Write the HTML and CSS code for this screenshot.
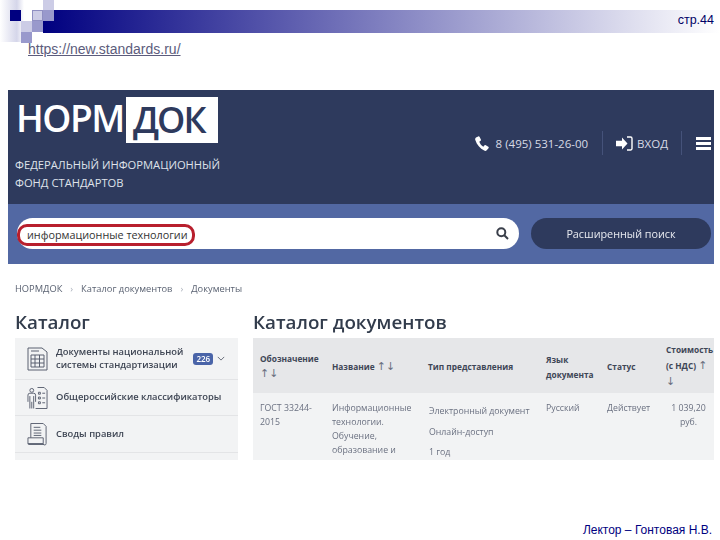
FILE: index.html
```html
<!DOCTYPE html>
<html lang="ru">

<head>
    <meta charset="UTF-8">
    <title>стр.44</title>
    <link rel="stylesheet" href="styles.css">
</head>

<body>
    <div id="slide">
        <!-- slide decoration -->
        <div class="fade"></div>
        <span class="sq sq-navy"></span>
        <span class="sq sq-a"></span>
        <span class="sq sq-b"></span>
        <span class="sq sq-c"></span>
        <span class="sq sq-d"></span>
        <span class="sq sq-e"></span>
        <span class="sq sq-f"></span>

        <div class="bar">стр.44</div>
        <a href="#" class="link">https://new.standards.ru/</a>

        <div class="shot">
            <div class="head">
                <div class="brand">
                    <div class="logo"><span class="logo-a">НОРМ</span><span class="logo-b">ДОК</span></div>
                    <p>ФЕДЕРАЛЬНЫЙ ИНФОРМАЦИОННЫЙ<br>ФОНД СТАНДАРТОВ</p>
                </div>
                <div class="tools">
                    <svg class="ico-phone" viewBox="0 0 14 15"><path d="M3.2 .4 1 1.6C.2 2.2 0 3 .3 4c1.6 5 4.700 8.400 8.900 10.600 1 .5 1.900.3 2.500-.4l1.800-2c.4-.5.3-1-.2-1.400L10.800 9.200c-.5-.3-1-.3-1.400.2L8.300 10.700C6.500 9.800 5.100 8 4.300 5.800l1.300-1c.4-.3.5-.8.300-1.300L4.500.8C4.200.2 3.700.1 3.200.4Z"/></svg>
                    <span class="phone">8 (495) 531-26-00</span>
                    <i class="sep"></i>
                    <svg class="ico-enter" viewBox="0 0 17 15"><path d="M0 4.800h6V1.500L11.500 7.500 6 13.500v-3.300H0Z"/><path class="br" d="M11 1h3.500a1.500 1.500 0 0 1 1.500 1.500v10a1.500 1.500 0 0 1-1.500 1.500H11"/></svg>
                    <span class="login">ВХОД</span>
                    <i class="sep sep-2"></i>
                    <div class="burger"><i></i><i></i><i></i></div>
                </div>
            </div>
            <div class="search">
                <div class="field">
                    <span class="mark">информационные технологии</span>
                    <svg class="ico-search" viewBox="0 0 13 13"><circle cx="5.300" cy="5.300" r="4"/><path d="M8.300 8.300 12 12"/></svg>
                </div>
                <div class="adv">Расширенный поиск</div>
            </div>
            <div class="crumbs">
                <span>НОРМДОК</span><b>›</b><span>Каталог документов</span><b>›</b><span>Документы</span>
            </div>
            <div class="cols">
                <div class="side">
                    <h2>Каталог</h2>
                    <div class="row row-1">
                        <svg class="cat" viewBox="0 0 21 24"><path d="M1 1h14l5 4v18H1ZM4 8h13v12H4ZM4 4h8M8 8v12M12.500 8v12M4 12h13M4 16h13"/></svg>
                        <span class="row-text">Документы национальной<br>системы стандартизации</span>
                        <span class="badge">226</span>
                        <svg class="chev" viewBox="0 0 10 6"><path d="M1 1l4 4 4-4"/></svg>
                    </div>
                    <div class="row row-2">
                        <svg class="cat" viewBox="0 0 22 24"><circle cx="5" cy="4" r="2"/><path d="M1 16V9a2 2 0 0 1 2-2h4a2 2 0 0 1 2 2v7M3 10v13M7 10v13M5 16v7M11 1h7l3 3v19H9M12 6h2v2h-2ZM12 11h2v2h-2ZM12 16h2v2h-2ZM16 7h3M16 12h3M16 17h3"/></svg>
                        <span class="row-text">Общероссийские классификаторы</span>
                    </div>
                    <div class="row">
                        <svg class="cat" viewBox="0 0 22 24"><path d="M4 16V1h13l3 3v18a1.500 1.500 0 0 1-3 0V16H1v6h16M1 22a1 1 0 0 0 1 1h16M7 5h7M7 8h8M7 11h8M7 13.500h8"/></svg>
                        <span class="row-text">Своды правил</span>
                    </div>
                    <div class="row-end"></div>
                </div>
                <div class="main">
                    <h2>Каталог документов</h2>
                    <div class="table">
                        <div class="th">Обозначение<br><span class="arr">↑↓</span></div>
                        <div class="th mid">Название <span class="arr">↑↓</span></div>
                        <div class="th mid">Тип представления</div>
                        <div class="th mid">Язык<br>документа</div>
                        <div class="th mid">Статус</div>
                        <div class="th th-cost">Стоимость<br>(с НДС) <span class="arr">↑</span><br><span class="arr">↓</span></div>
                        <div class="td">ГОСТ 33244-<br>2015</div>
                        <div class="td">Информационные<br>технологии.<br>Обучение,<br>образование и</div>
                        <div class="td td-type"><p>Электронный документ</p><p>Онлайн-доступ</p><p>1 год</p></div>
                        <div class="td">Русский</div>
                        <div class="td">Действует</div>
                        <div class="td td-cost">1 039,20<br>руб.</div>
                    </div>
                </div>
            </div>
        </div>

        <div class="author">Лектор – Гонтовая Н.В.</div>
    </div>
</body>

</html>
```
FILE: styles.css
```css
* {
    margin: 0;
    padding: 0;
    box-sizing: border-box;
}

body {
    background: #fff;
}

#slide {
    position: relative;
    width: 720px;
    height: 540px;
    overflow: hidden;
    font-family: "Liberation Sans", sans-serif;
    display: flex;
    flex-direction: column;
}

/* decoration */
.fade {
    position: absolute;
    left: 0;
    top: 0;
    width: 24px;
    height: 42px;
    background: linear-gradient(90deg, #fff, #d5d6ea 70%, #fff);
}

.sq {
    position: absolute;
    width: 11px;
    height: 11px;
    background: #ccccE6;
}

.sq-navy { left: 10px; top: 10px; background: #000080; }
.sq-a { left: 32px; top: 10px; background: #ccccE6; border: 1px solid #8f8fc2; }
.sq-b { left: 43px; top: 10px; background: #9999cc; }
.sq-c { left: 43px; top: 0; height: 10px; }
.sq-d { left: 21px; top: 21px; }
.sq-e { left: 32px; top: 21px; background: #9999cc; }
.sq-f { left: 21px; top: 32px; background: #9999cc; }

.bar {
    margin: 10px 0 0 43px;
    height: 23px;
    padding-right: 6px;
    background: linear-gradient(90deg, #000080, #fff);
    color: #000066;
    font-size: 12.500px;
    line-height: 20px;
    text-align: right;
}

.link {
    margin: 8px 0 0 28px;
    color: #5c5c7c;
    font-size: 14px;
    line-height: 17px;
    align-self: flex-start;
    text-decoration: underline;
}

.author {
    margin: 62px 8px 0 0;
    color: #000080;
    font-size: 12px;
    line-height: 16px;
    text-align: right;
}

/* screenshot */
.shot {
    margin: 32px 6px 0 8px;
    height: 370px;
    font-family: "Open Sans", sans-serif;
    filter: blur(.35px);
}

.head {
    height: 114px;
    padding: 7px 3px 0 7px;
    background: #2e3a5d;
    display: flex;
    justify-content: space-between;
}

.logo {
    display: flex;
    align-items: flex-start;
    font-size: 36px;
    line-height: 46px;
}

.logo-a {
    color: #fff;
    width: 110px;
    margin: -2px 0 0 1px;
    font-size: 37px;
    font-weight: 600;
    letter-spacing: -1.500px;
}

.logo-b {
    background: #fff;
    color: #2e3a5d;
    width: 92px;
    height: 46px;
    padding-left: 7px;
    font-weight: 600;
    letter-spacing: -2px;
}

.brand p {
    margin-top: 13px;
    color: #dfe2ea;
    font-size: 11.200px;
    line-height: 18px;
}

.tools {
    display: flex;
    align-items: center;
    height: 24px;
    margin-top: 34px;
    color: #d8dbe6;
    font-size: 11.500px;
}

.ico-phone {
    width: 14px;
    height: 15px;
    fill: #fff;
    margin-right: 7px;
}

.sep {
    width: 1px;
    height: 24px;
    background: #45527a;
    margin: 0 13px 0 14px;
}

.sep-2 {
    margin: 0 14px 0 13px;
}

.ico-enter {
    width: 17px;
    height: 15px;
    fill: #fff;
    margin-right: 4px;
}

.ico-enter .br {
    fill: none;
    stroke: #fff;
    stroke-width: 1.4;
}

.burger {
    width: 15px;
}

.burger i {
    display: block;
    height: 3px;
    background: #fff;
    margin: 2px 0;
}

.search {
    height: 60px;
    padding: 14px 3px 0 9px;
    background: #5268a3;
    display: flex;
    gap: 12px;
}

.field {
    width: 502px;
    height: 31px;
    background: #fff;
    border-radius: 16px;
    display: flex;
    align-items: center;
    justify-content: space-between;
    padding-right: 10px;
}

.mark {
    border: 3px solid #b81f2d;
    border-radius: 10px;
    padding: 0 4px 0 7px;
    height: 22px;
    line-height: 16px;
    color: #333;
    font-size: 10.800px;
    margin-top: 2px;
}

.ico-search {
    width: 13px;
    height: 13px;
    fill: none;
    stroke: #3a3f4a;
    stroke-width: 2;
}

.adv {
    width: 180px;
    height: 31px;
    border-radius: 16px;
    background: #2e3a5d;
    color: #e8eaf0;
    font-size: 10.800px;
    font-weight: 500;
    line-height: 31px;
    text-align: center;
}

.crumbs {
    height: 48px;
    padding: 18px 0 0 7px;
    color: #5a6272;
    font-size: 9.300px;
    line-height: 14px;
    display: flex;
}

.crumbs b {
    color: #aab0bb;
    font-weight: 400;
    margin: 0 8px;
}

.cols {
    display: flex;
    padding-left: 7px;
    gap: 15px;
}

h2 {
    color: #323c4c;
    font-size: 18.800px;
    font-weight: 600;
    line-height: 20px;
    padding-bottom: 6px;
    box-sizing: content-box;
}

.side {
    width: 223px;
}

.row {
    height: 37px;
    background: #f2f3f4;
    border-bottom: 1px solid #e3e4e6;
    padding-left: 12px;
    display: flex;
    align-items: center;
    color: #3f4654;
    font-size: 9.400px;
    font-weight: 600;
    line-height: 12.500px;
}

.row-1 {
    height: 42px;
}

.row-2 {
    height: 36px;
}

.row-end {
    height: 7px;
    background: #f2f3f4;
}

.cat {
    width: 21px;
    height: 24px;
    margin-right: 8px;
    fill: none;
    stroke: #5a6170;
    stroke-width: 1;
    flex: none;
}

.row-text {
    white-space: nowrap;
}

.badge {
    margin-left: 10px;
    width: 20px;
    height: 12px;
    border-radius: 3px;
    background: #4a64a8;
    color: #fff;
    font-size: 8px;
    line-height: 12px;
    text-align: center;
}

.chev {
    width: 8px;
    height: 5px;
    margin-left: 4px;
    fill: none;
    stroke: #4a5060;
}

.main {
    flex: 1;
}

.table {
    display: grid;
    grid-template-columns: 72px 96px 118px 61px 59px 55px;
    grid-template-rows: 55px 67px;
    overflow: hidden;
    background: #f2f3f4;
    color: #6a7080;
    font-size: 8.750px;
}

.th {
    background: #e6e7e9;
    color: #3e4656;
    font-weight: 700;
    font-size: 8.300px;
    line-height: 15px;
    padding: 13px 0 0 7px;
}

.th.mid {
    padding-top: 21px;
}

.th:nth-child(4) {
    padding-top: 14px;
}

.th-cost {
    padding: 4px 0 0 7px;
    line-height: 16px;
    white-space: nowrap;
}

.arr {
    font-family: "DejaVu Sans", sans-serif;
    font-weight: 400;
    color: #6a7080;
    font-size: 11px;
    line-height: 12px;
}

.td {
    padding: 8px 0 0 7px;
    line-height: 14px;
    height: 67px;
    overflow: hidden;
}

.td-type {
    padding: 11px 0 0 8px;
}

.td-type p {
    height: 20.500px;
}

.td-cost {
    padding-left: 4px;
    text-align: center;
}
```
